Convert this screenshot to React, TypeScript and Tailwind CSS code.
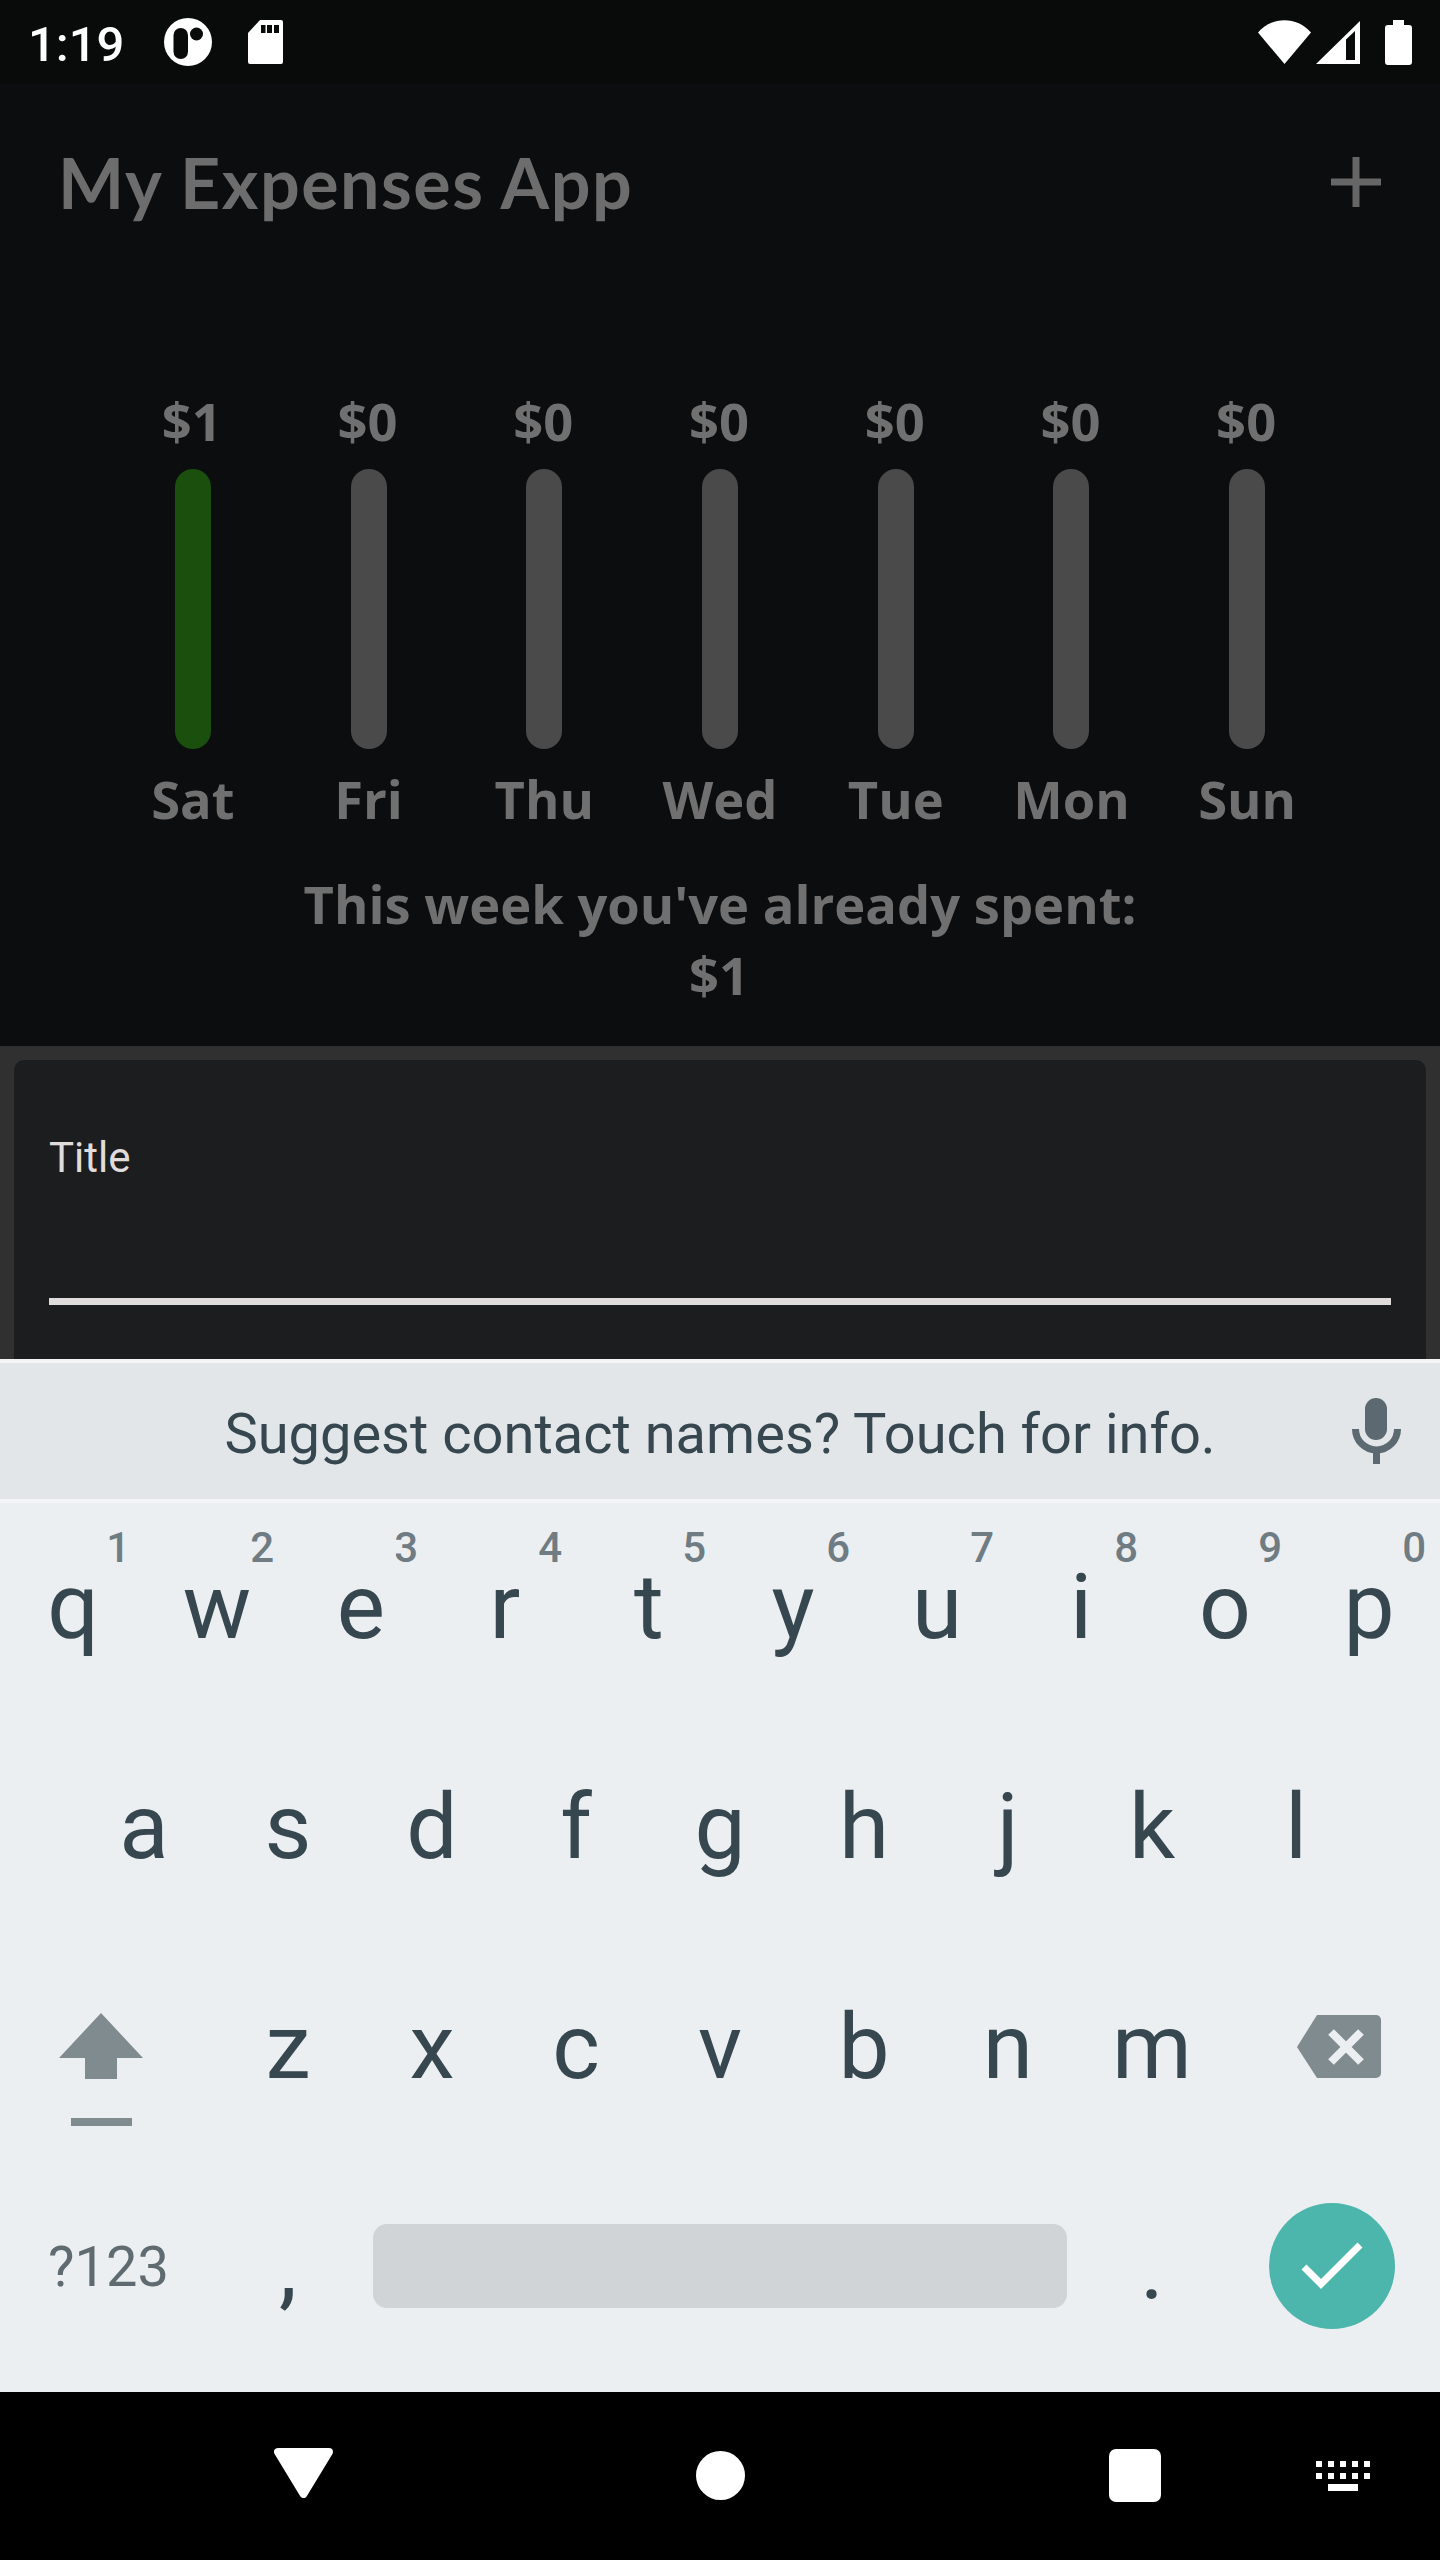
const days = [
  { label: "Sat", amount: "$1", bar: "bg-[#1a4f0e]" },
  { label: "Fri", amount: "$0", bar: "bg-[#4a4a4a]" },
  { label: "Thu", amount: "$0", bar: "bg-[#4a4a4a]" },
  { label: "Wed", amount: "$0", bar: "bg-[#4a4a4a]" },
  { label: "Tue", amount: "$0", bar: "bg-[#4a4a4a]" },
  { label: "Mon", amount: "$0", bar: "bg-[#4a4a4a]" },
  { label: "Sun", amount: "$0", bar: "bg-[#4a4a4a]" },
];

const rowOne = [
  ["q", "1"],
  ["w", "2"],
  ["e", "3"],
  ["r", "4"],
  ["t", "5"],
  ["y", "6"],
  ["u", "7"],
  ["i", "8"],
  ["o", "9"],
  ["p", "0"],
];

function Letter({ children }: { children: React.ReactNode }) {
  return (
    <div className="flex h-[220px] w-[144px] items-center justify-center text-[91px] leading-none text-[#37474f]">
      {children}
    </div>
  );
}

function StatusBar() {
  return (
    <div className="flex h-[84px] items-center bg-[#090b0b] pl-[28px] pr-[28px] text-white">
      <div className="mt-[5px] w-[136px] text-[49px] font-medium leading-none">1:19</div>
      <svg width="48" height="48" viewBox="0 0 48 48">
        <circle cx="24" cy="24" r="24" fill="#fff" />
        <rect x="9.5" y="10" width="14.5" height="31" rx="7.25" fill="#090b0b" />
        <circle cx="32.5" cy="16" r="6.5" fill="#090b0b" />
      </svg>
      <svg className="ml-[36px]" width="35" height="44" viewBox="0 0 35 44">
        <path d="M12 0H33a2 2 0 0 1 2 2V42a2 2 0 0 1-2 2H2a2 2 0 0 1-2-2V13Z" fill="#fff" />
        <path d="M13 5h4.5v8H13ZM19 5h5v8h-5ZM26 5h5v8h-5Z" fill="#090b0b" />
      </svg>
      <div className="flex-1" />
      <svg width="53" height="44" viewBox="0 0 53 44">
        <path d="M26.5 44L0 12.5C14-4 39-4 53 12.5Z" fill="#fff" />
      </svg>
      <svg className="ml-[5px]" width="44" height="43" viewBox="0 0 44 43">
        <path d="M0 43L44 0V43ZM30 39H39V10L30 18.5Z" fill="#fff" fillRule="evenodd" />
      </svg>
      <svg className="ml-[25px]" width="27" height="45" viewBox="0 0 27 45">
        <path d="M8 0H19V5H24a3 3 0 0 1 3 3V42a3 3 0 0 1-3 3H3a3 3 0 0 1-3-3V8a3 3 0 0 1 3-3H8Z" fill="#fff" />
      </svg>
    </div>
  );
}

function Chart() {
  return (
    <div className="h-[762px] bg-[#0c0d0f] pt-[101px] font-['Open_Sans',sans-serif] text-[52.5px] font-bold leading-[71.5px] text-[#707070]">
      <div className="grid grid-cols-7 px-[105px]">
        {days.map((d) => (
          <div key={d.label} className="flex flex-col items-center">
            <div className="-translate-x-[1px]">{d.amount}</div>
            <div className={`mt-[12px] h-[280px] w-[36px] rounded-full ${d.bar}`} />
            <div className="mt-[14px]">{d.label}</div>
          </div>
        ))}
      </div>
      <div className="mt-[34px] text-center leading-[71px]">
        <div>This week you've already spent:</div>
        <div className="-translate-x-[1px]">$1</div>
      </div>
    </div>
  );
}

function Keyboard() {
  return (
    <div className="flex flex-1 flex-col bg-[#eceff1]">
      <div className="h-[4px] bg-[#f4f5f7]" />
      <div className="grid h-[136px] grid-cols-[1fr_auto_1fr] items-center bg-[#e2e6e9]">
        <div />
        <div className="pt-[6px] text-[56px] leading-none text-[#37474f]">
          Suggest contact names? Touch for info.
        </div>
        <div className="flex justify-end pr-[39px]">
          <svg width="49" height="66" viewBox="0 0 49 66" fill="#5c6970">
            <rect x="13" y="0" width="22" height="42" rx="11" />
            <path d="M3.5 31A21 21 0 0 0 45.5 31" fill="none" stroke="#5c6970" strokeWidth="7" />
            <rect x="21" y="52" width="7" height="14" />
          </svg>
        </div>
      </div>
      <div className="h-[4px] bg-[#f4f5f7]" />

      <div className="-mt-[6px] flex translate-x-[1px]">
        {rowOne.map(([key, hint]) => (
          <div key={key} className="relative">
            <Letter>{key}</Letter>
            <span className="absolute right-[15px] top-[30px] text-[42px] font-medium leading-none text-[#6f7c83]">
              {hint}
            </span>
          </div>
        ))}
      </div>

      <div className="flex pl-[72px]">
        {["a", "s", "d", "f", "g", "h", "j", "k", "l"].map((key) => (
          <Letter key={key}>{key}</Letter>
        ))}
      </div>

      <div className="flex">
        <div className="flex h-[220px] w-[216px] items-start justify-center pr-[14px] pt-[76px]">
          <svg width="84" height="113" viewBox="0 0 84 113" fill="#808b8f">
            <path d="M42 0L84 45H58V66H26V45H0Z" />
            <rect x="12" y="105" width="61" height="8" />
          </svg>
        </div>
        {["z", "x", "c", "v", "b", "n", "m"].map((key) => (
          <Letter key={key}>{key}</Letter>
        ))}
        <div className="flex h-[220px] w-[216px] items-center justify-center pb-[2px] pl-[14px]">
          <svg width="84" height="63" viewBox="0 0 84 63">
            <path d="M20 0H79a5 5 0 0 1 5 5V58a5 5 0 0 1-5 5H20L0 32Z" fill="#808b8f" />
            <path d="M34 17L64 47M64 17L34 47" stroke="#eceff1" strokeWidth="8" />
          </svg>
        </div>
      </div>

      <div className="flex items-center">
        <div className="flex h-[220px] w-[216px] items-center pl-[48px] text-[56px] leading-none text-[#5f6b70]">
          ?123
        </div>
        <Letter>,</Letter>
        <div className="ml-[13px] h-[84px] w-[694px] -translate-y-[1px] rounded-[14px] bg-[#d0d4d7]" />
        <div className="flex h-[220px] w-[170px] items-center justify-center text-[91px] leading-none text-[#37474f]">
          .
        </div>
        <div className="ml-[32px] flex h-[126px] w-[126px] -translate-y-[1px] items-center justify-center rounded-full bg-[#4db6ac]">
          <svg width="126" height="126" viewBox="0 0 126 126">
            <path d="M35 64L52 81L91 42" fill="none" stroke="#fff" strokeWidth="7" />
          </svg>
        </div>
      </div>
    </div>
  );
}

function NavBar() {
  return (
    <div className="flex h-[168px] bg-black pl-[274px] pt-[56px]">
      <svg width="59" height="50" viewBox="0 0 59 50">
        <path d="M4 4H55L29.5 46Z" fill="#fff" stroke="#fff" strokeWidth="8" strokeLinejoin="round" />
      </svg>
      <div className="ml-[363px] mt-[3px] h-[49px] w-[49px] rounded-full bg-white" />
      <div className="ml-[364px] mt-[1px] h-[53px] w-[52px] rounded-[7px] bg-white" />
      <svg className="ml-[155px] mt-[13px]" width="54" height="30" viewBox="0 0 54 30" fill="#fff">
        <path d="M0 0h6v6H0ZM12 0h6v6h-6ZM24 0h6v6h-6ZM36 0h6v6h-6ZM48 0h6v6h-6Z" />
        <path d="M0 12h6v6H0ZM12 12h6v6h-6ZM24 12h6v6h-6ZM36 12h6v6h-6ZM48 12h6v6h-6Z" />
        <path d="M12 23h30v7H12Z" />
      </svg>
    </div>
  );
}

export default function App() {
  return (
    <div className="flex h-[2560px] w-[1440px] flex-col overflow-hidden font-['Roboto',sans-serif]">
      <StatusBar />

      {/* App bar */}
      <div className="flex h-[200px] items-center justify-between bg-[#0c0d0f] pb-[4px] pl-[58px] pr-[59px]">
        <div className="font-['Lato',sans-serif] text-[70px] font-bold leading-none tracking-[1.5px] text-[#6d6d6d]">
          My Expenses App
        </div>
        <svg width="50" height="50" viewBox="0 0 50 50" fill="#666">
          <rect x="21.5" y="0" width="7" height="50" />
          <rect x="0" y="21.5" width="50" height="7" />
        </svg>
      </div>

      <Chart />

      {/* New expense sheet, cut off by the keyboard */}
      <div className="h-[313px] overflow-hidden bg-[#303030] px-[14px] pt-[14px]">
        <div className="h-[400px] rounded-[10px] bg-[#1c1d1f] px-[35px] pt-[77px]">
          <div className="text-[42px] leading-none text-[#e0dcdb]">Title</div>
          <div className="mt-[119px] h-[7px] bg-[#e0dcdb]" />
        </div>
      </div>

      <Keyboard />
      <NavBar />
    </div>
  );
}
